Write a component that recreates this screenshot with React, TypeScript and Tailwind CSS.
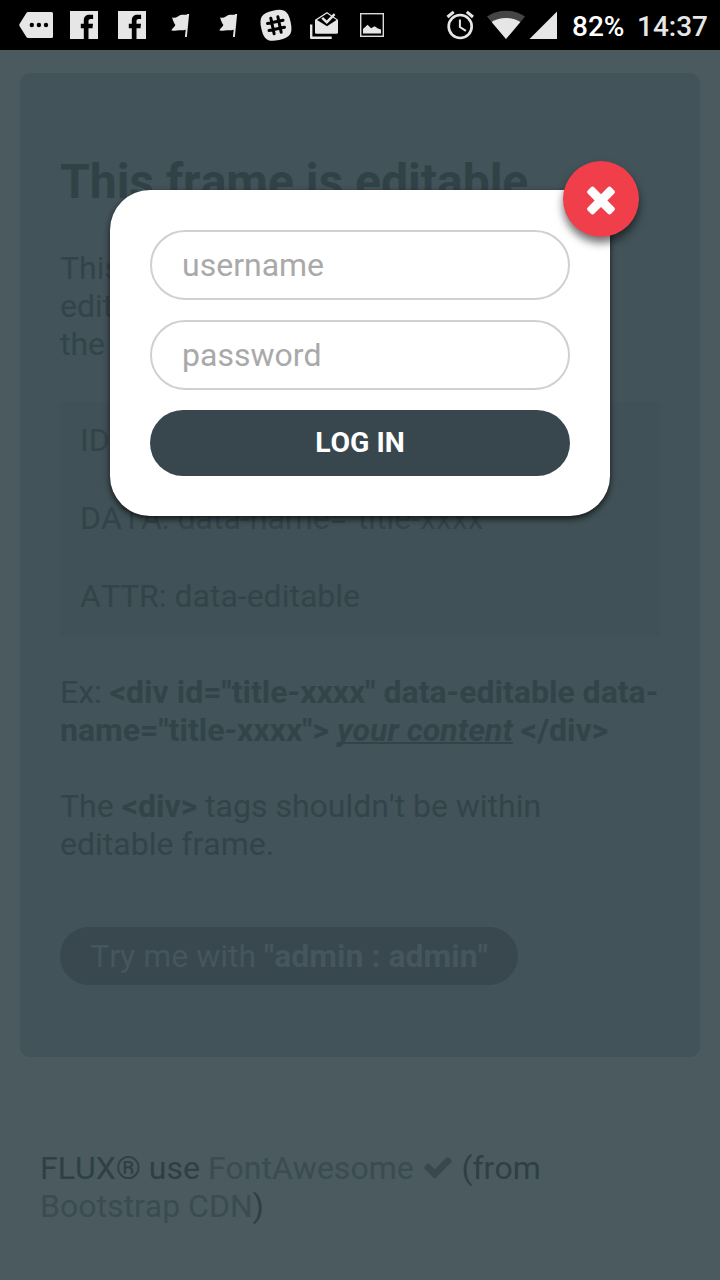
import React from "react";

function StatusBar() {
  return (
    <header className="h-[50px] shrink-0 bg-black">
      <svg width="720" height="50" viewBox="0 0 720 50" fill="#e6e6e6">
        <path d="M28 12h23.500q1.500 0 1.500 1.500v23q0 1.500-1.500 1.500H28q-1 0-1.600-.9L19.500 26q-.5-1 0-2l6.900-11.100q.6-.9 1.600-.9z" />
        <g fill="#000">
          <circle cx="31.800" cy="25" r="2.200" />
          <circle cx="38.900" cy="25" r="2.200" />
          <circle cx="46" cy="25" r="2.200" />
        </g>
        {[70, 118].map((x) => (
          <g key={x} transform={`translate(${x} 11)`}>
            <rect width="28" height="28" />
            <path
              fill="#000"
              d="M13.800 28V17.200h-3v-4.400h3V9.500c0-3.700 2.200-5.700 5.700-5.700h3.600v4.200h-2.300c-1.700 0-2.300.7-2.300 2.200v2.600h4.500l-.5 4.400h-4V28z"
            />
          </g>
        ))}
        {[171, 219].map((x) => (
          <g key={x} transform={`translate(${x} 13)`}>
            <path d="M1.200 4.200c3.600 1.800 5.400-1.200 8.400-2.200 2.600-.8 4.600.4 7.600-1.100l-1.900 15.700c-2.600 1.200-4.600.3-7 .6-2.700.3-4.400 1.200-8 0 1.200-2 3.500-3.400 4.100-5.100-.9-1.800-2.800-4.300-3.200-7.900z" />
            <path d="M17.200 1 14.900 24" stroke="#e6e6e6" strokeWidth="1.900" />
          </g>
        ))}
        <g transform="rotate(-12 276 25.300)">
          <path d="M276 10.300c11.500 0 15 3.500 15 15s-3.500 15-15 15-15-3.500-15-15 3.500-15 15-15z" />
          <path
            d="M272.400 17.400v15.800M279.600 17.400v15.800M268.100 21.800h15.800M268.100 29h15.800"
            stroke="#000"
            strokeWidth="3"
            strokeLinecap="round"
          />
        </g>
        <path d="M311.200 24.500v13.200h20.500" fill="none" stroke="#e6e6e6" strokeWidth="2.400" strokeLinejoin="round" />
        <path d="M315 19.800 327 12l11 7.800v12.400q0 1.600-1.600 1.600h-19.800q-1.600 0-1.600-1.600z" />
        <path d="m317 20 10-6.500 9.500 6.500-9.500 6.300z" fill="#000" />
        <path d="m322.200 17.800 4.600 4.400 7.800-8" fill="none" stroke="#e6e6e6" strokeWidth="2.400" />
        <rect x="360.700" y="13.700" width="22.600" height="22.600" fill="none" stroke="#d8ddd8" strokeWidth="1.400" />
        <path d="M363 33.500v-4.400l4.600-4.300 3.500 3.400 3.500-2 3.300 2.400 3.100 1v3.900z" />
        <g fill="none" stroke="#e6e6e6">
          <circle cx="460.200" cy="26.500" r="11.500" strokeWidth="2.700" />
          <path d="M459.900 19.500v7.500l6 3.900" strokeWidth="2" />
          <path d="m447.500 17 6.200-5.200M473 17l-6.200-5.200" strokeWidth="3" />
        </g>
        <path d="M506 39 487 16.500q8.500-5.800 19-5.800t19 5.800z" fill="#454545" />
        <path d="M506 39 491.600 22q6.300-4 14.400-4t14.400 4z" />
        <path d="M529.500 39H557V11.500z" />
        <text x="572" y="35.600" fontFamily="Roboto, sans-serif" fontSize="28" fontWeight="500" fill="#fff" textLength="52.500" lengthAdjust="spacingAndGlyphs">82%</text>
        <text x="637" y="35.600" fontFamily="Roboto, sans-serif" fontSize="28" fontWeight="500" textLength="71" lengthAdjust="spacingAndGlyphs">14:37</text>
      </svg>
    </header>
  );
}

function LoginDialog() {
  return (
    <div className="absolute left-[110px] top-[190px] flex h-[326px] w-[500px] flex-col gap-5 rounded-[40px] bg-white p-10 shadow-[0_3px_6px_rgba(0,0,0,0.7)]">
      <input
        placeholder="username"
        className="h-[70px] w-full rounded-[35px] border-2 border-[#d0d0d0] bg-white px-[30px] text-[32px] font-normal placeholder:text-[#a9a9a9]"
      />
      <input
        type="password"
        placeholder="password"
        className="h-[70px] w-full rounded-[35px] border-2 border-[#d0d0d0] bg-white px-[30px] text-[32px] font-normal placeholder:text-[#a9a9a9]"
      />
      <button className="h-[66px] w-full rounded-[33px] bg-[#37474d] text-[28.4px] font-bold text-white">
        LOG IN
      </button>
      <button
        aria-label="Close"
        className="absolute -right-[29px] -top-[29px] flex size-[76px] items-center justify-center rounded-full bg-[#f03e4b] shadow-[0_6px_8px_rgba(0,0,0,0.55)]"
      >
        <svg width="42" height="42" viewBox="0 0 1792 1792" fill="#fff">
          <path d="M1490 1322q0 40-28 68l-136 136q-28 28-68 28t-68-28l-294-294-294 294q-28 28-68 28t-68-28l-136-136q-28-28-28-68t28-68l294-294-294-294q-28-28-28-68t28-68l136-136q28-28 68-28t68 28l294 294 294-294q28-28 68-28t68 28l136 136q28 28 28 68t-28 68l-294 294 294 294q28 28 28 68z" />
        </svg>
      </button>
    </div>
  );
}

export default function App() {
  return (
    <div className="relative flex h-[1280px] w-[720px] flex-col overflow-hidden bg-[#4a5a5e] font-['Roboto',sans-serif] text-[32px] font-normal leading-[38px] text-[#334449] [font-kerning:none]">
      <StatusBar />
      <main className="mx-5 mt-[23px] h-[984px] shrink-0 rounded-[10px] bg-[#425359] px-10 pt-20">
        <h1 className="pt-px text-[48px] font-bold leading-[55px] text-[#314247]">This frame is editable</h1>
        <p className="mt-10">
          This
          <br />
          editable
          <br />
          the
        </p>
        <div className="mt-[39px] flex h-[234px] flex-col gap-10 bg-[#405157] px-5 pt-[19px]">
          <p>ID:</p>
          <p>DATA: data-name="title-xxxx"</p>
          <p>ATTR: data-editable</p>
        </div>
        <p className="mt-[37px] whitespace-nowrap">
          Ex: <b className="font-bold">&lt;div id="title-xxxx" data-editable data-</b>
          <br />
          <b className="font-bold">
            name="title-xxxx"&gt; <i className="underline decoration-2 [text-decoration-skip-ink:none]">your content</i> &lt;/div&gt;
          </b>
        </p>
        <p className="mt-[38px]">
          The <b className="font-bold">&lt;div&gt;</b> tags shouldn't be within
          <br />
          editable frame.
        </p>
        <button className="mt-16 flex h-[58px] w-[458px] items-center justify-center whitespace-pre rounded-[29px] bg-[#38484e] text-[#45565c]">
          Try me with <b className="font-bold">"admin : admin"</b>
        </button>
      </main>
      <footer className="mt-[92px] px-10 text-[#2f3f44]">
        FLUX® use <span className="text-[#3a4b51]">FontAwesome</span>{" "}
        <svg className="inline-block align-[-4px]" width="32" height="32" viewBox="0 0 1792 1792" fill="#38494e">
          <path d="M1671 566q0 40-28 68l-724 724-136 136q-28 28-68 28t-68-28l-136-136-362-362q-28-28-28-68t28-68l136-136q28-28 68-28t68 28l294 295 656-657q28-28 68-28t68 28l136 136q28 28 28 68z" />
        </svg>{" "}
        (from
        <br />
        <span className="text-[#3a4b51]">Bootstrap CDN</span>)
      </footer>
      <LoginDialog />
    </div>
  );
}
